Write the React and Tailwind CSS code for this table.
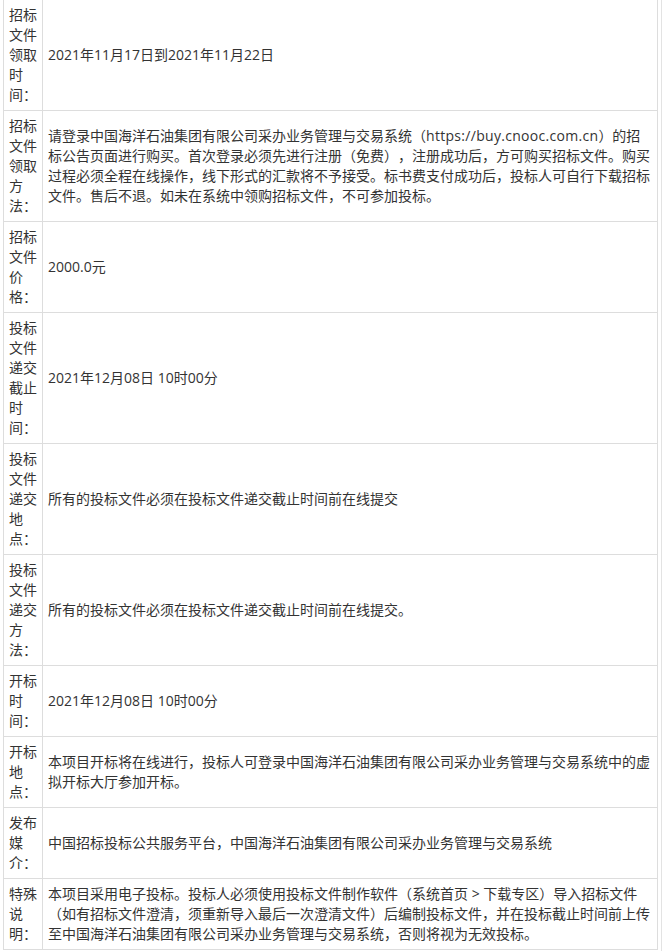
const rows = [
  { label: ["招标", "文件", "领取", "时", "间："], content: "2021年11月17日到2021年11月22日" },
  {
    label: ["招标", "文件", "领取", "方", "法："],
    content: (
      <>
        请登录中国海洋石油集团有限公司采办业务管理与交易系统（
        <span className="tracking-[0.3px]">https://buy.cnooc.com.cn</span>
        ）的招标公告页面进行购买。首次登录必须先进行注册（免费），注册成功后，方可购买招标文件。购买过程必须全程在线操作，线下形式的汇款将不予接受。标书费支付成功后，投标人可自行下载招标文件。售后不退。如未在系统中领购招标文件，不可参加投标。
      </>
    ),
  },
  { label: ["招标", "文件", "价", "格："], content: "2000.0元" },
  { label: ["投标", "文件", "递交", "截止", "时", "间："], content: "2021年12月08日 10时00分" },
  { label: ["投标", "文件", "递交", "地", "点："], content: "所有的投标文件必须在投标文件递交截止时间前在线提交" },
  { label: ["投标", "文件", "递交", "方", "法："], content: "所有的投标文件必须在投标文件递交截止时间前在线提交。" },
  { label: ["开标", "时", "间："], content: "2021年12月08日 10时00分" },
  {
    label: ["开标", "地", "点："],
    content: "本项目开标将在线进行，投标人可登录中国海洋石油集团有限公司采办业务管理与交易系统中的虚拟开标大厅参加开标。",
  },
  { label: ["发布", "媒", "介："], content: "中国招标投标公共服务平台，中国海洋石油集团有限公司采办业务管理与交易系统" },
  {
    label: ["特殊", "说", "明："],
    content:
      "本项目采用电子投标。投标人必须使用投标文件制作软件（系统首页 > 下载专区）导入招标文件（如有招标文件澄清，须重新导入最后一次澄清文件）后编制投标文件，并在投标截止时间前上传至中国海洋石油集团有限公司采办业务管理与交易系统，否则将视为无效投标。",
  },
];

export default function App() {
  return (
    <div
      className="w-[662px] h-[951px] overflow-hidden bg-white flex text-[14px] leading-[20px] text-[#333] [text-spacing-trim:space-all]"
      style={{ fontFamily: '"Open Sans", "Noto Sans CJK SC", sans-serif' }}
    >
      <div className="w-[3px] shrink-0" />
      <div className="w-[655px] shrink-0 border-l border-r border-[#dddddd] self-start">
        {rows.map((r, i) => (
          <div key={i} className="flex border-b border-[#dddddd]">
            <div className="w-[39px] shrink-0 border-r border-[#dddddd] px-[5px] py-[5px]">
              {r.label.map((l, j) => (
                <div key={j} className="whitespace-nowrap">
                  {l}
                </div>
              ))}
            </div>
            <div className="flex-1 min-w-0 px-[5px] py-[5px] flex items-center">
              <div className="break-words">{r.content}</div>
            </div>
          </div>
        ))}
      </div>
      <div className="w-[3px] shrink-0" />
      <div className="w-px shrink-0 bg-[#e3e3e3]" />
    </div>
  );
}
